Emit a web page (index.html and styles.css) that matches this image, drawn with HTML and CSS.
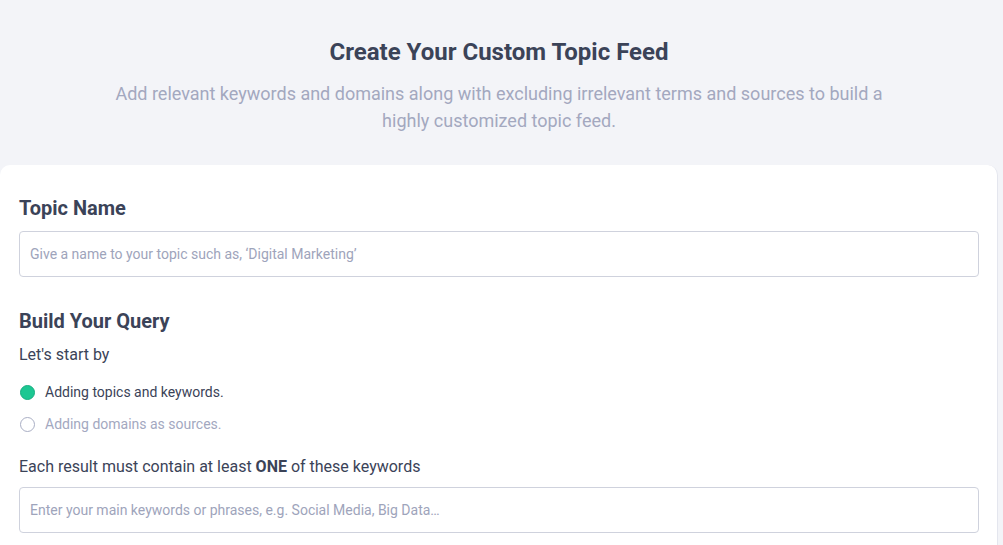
FILE: index.html
```html
<!DOCTYPE html>
<html>
<head>
<meta charset="utf-8">
<link rel="stylesheet" href="styles.css">
</head>
<body>
<div class="page">
  <header class="intro">
    <h1 class="title">Create Your Custom Topic Feed</h1>
    <p class="subtitle">Add relevant keywords and domains along with excluding irrelevant terms and sources to build a highly customized topic feed.</p>
  </header>
  <section class="card">
    <h2 class="section-title">Topic Name</h2>
    <div class="input"><span class="placeholder">Give a name to your topic such as, ‘Digital Marketing’</span></div>
    <h2 class="section-title query-title">Build Your Query</h2>
    <p class="text">Let's start by</p>
    <div class="radios">
      <label class="radio checked"><span class="dot"></span><span>Adding topics and keywords.</span></label>
      <label class="radio"><span class="dot"></span><span>Adding domains as sources.</span></label>
    </div>
    <p class="text">Each result must contain at least <b>ONE</b> of these keywords</p>
    <div class="input input-keywords"><span class="placeholder">Enter your main keywords or phrases, e.g. Social Media, Big Data…</span></div>
  </section>
</div>
</body>
</html>
```
FILE: styles.css
```css
* { box-sizing: border-box; }
html, body { margin: 0; padding: 0; }
body {
  background: #f3f4f8;
  font-family: Roboto, "Liberation Sans", sans-serif;
  color: #3b4358;
  overflow: hidden;
}
.page { width: 998px; }
.intro {
  text-align: center;
  padding-top: 36px;
  height: 165px;
}
.title {
  margin: 0;
  font-size: 24px;
  font-weight: 700;
  line-height: 32px;
  color: #3b4358;
}
.subtitle {
  margin: 12px auto 0;
  width: 790px;
  font-size: 18px;
  line-height: 27px;
  color: #a3a8bf;
}
.card {
  background: #fff;
  border-radius: 10px;
  border-right: 1px solid #e4e6ee;
  padding: 28px 19px 12px 19px;
  height: 400px;
}
.section-title {
  margin: 0;
  font-size: 20px;
  font-weight: 700;
  line-height: 30px;
  color: #3b4358;
}
.input {
  margin-top: 8px;
  width: 960px;
  height: 46px;
  border: 1px solid #cfd2dd;
  border-radius: 4px;
  display: flex;
  align-items: center;
  padding-left: 10px;
}
.input-keywords { margin-top: 9px; }
.placeholder {
  font-size: 14px;
  color: #9ea4bb;
}
.query-title { margin-top: 29px; }
.text {
  margin: 8px 0 0;
  font-size: 16px;
  line-height: 22px;
  color: #3b4358;
}
.text b { font-weight: 700; }
.radios {
  display: flex;
  flex-direction: column;
  gap: 12px;
  margin: 16px 0 22px;
}
.radio {
  display: flex;
  align-items: center;
  gap: 11px;
  padding-left: 1px;
  font-size: 14px;
  line-height: 20px;
  color: #3b4358;
}
.radio .dot {
  width: 15px;
  height: 15px;
  margin-left: -0.5px;
  margin-right: -0.5px;
  border-radius: 50%;
  border: 1.5px solid #a9aec4;
  background: #fff;
  flex: none;
}
.radio.checked .dot {
  background: #1cc792;
  border-color: #16ad80;
}
.radio:not(.checked) { color: #a3a8bf; }
```
